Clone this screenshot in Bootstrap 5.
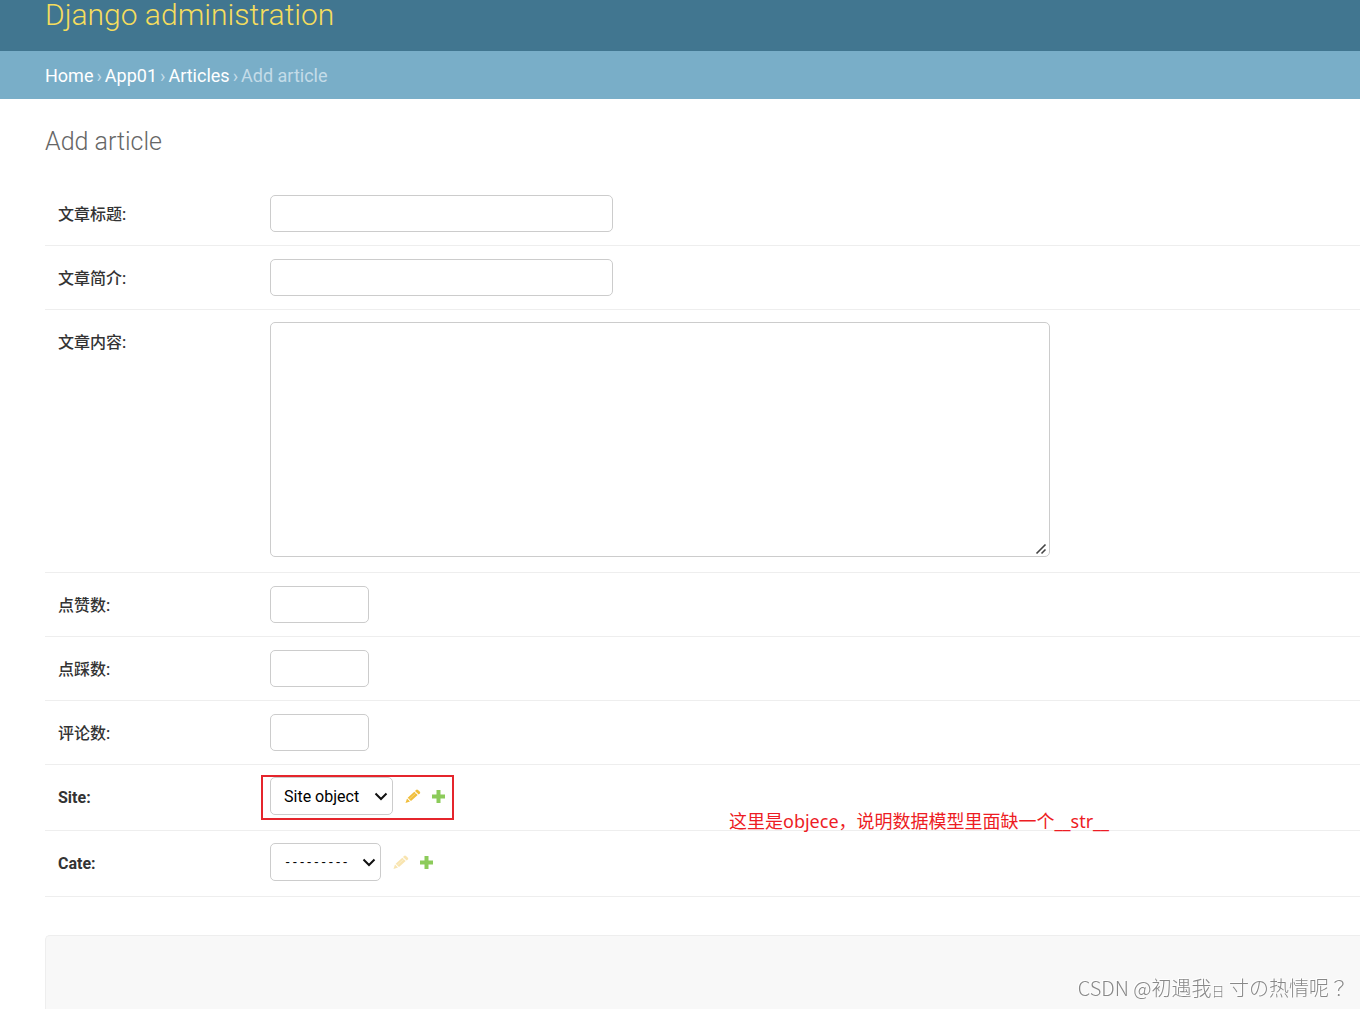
<!DOCTYPE html>
<html lang="zh-CN">
<head>
<meta charset="utf-8">
<meta name="viewport" content="width=device-width, initial-scale=1">
<title>Add article | Django site admin</title>
<link href="https://cdn.jsdelivr.net/npm/bootstrap@5.3.0/dist/css/bootstrap.min.css" rel="stylesheet">
<style>
body { font-family: Roboto, "Noto Sans CJK SC", sans-serif; font-size: 16px; line-height: 20px; color: #333; min-height: 100vh; overflow: hidden; }
.site-head { background: #417690; padding: 0 45px 21px; }
.site-head h1 { font-size: 30px; line-height: 30px; font-weight: 300; }
.site-head a { color: #f5dd5d; }
.crumbs { background: #79aec8; color: #c4dce8; padding: 15px 45px 13px; font-size: 18px; gap: 3px; }
.crumbs a { color: #fff; }
.main-area { padding: 28px 0 0 45px; }
.main-area h2 { font-size: 25px; line-height: 30px; font-weight: 300; color: #666; margin-bottom: 25px; }
.form-line { padding: 13px; border-bottom: 1px solid #eee; }
.form-line.tall-line { padding: 12px 13px 15px; }
.form-line > label { width: 212px; padding-top: 10px; font-weight: 700; flex: none; }
.form-line.tall-line > label { padding-top: 11px; }
.form-line > label.cjk-label { font-weight: 500; }
.field-box, .field-box:focus { border: 1px solid #ccc; border-radius: 5px; height: 37px; padding: 6px 8px; font-size: 16px; color: #000; }
.text-field { width: 343px; }
.num-field { width: 99px; }
textarea.field-box { width: 780px; height: 235px; max-width: 100%; resize: both; }
textarea.field-box::-webkit-resizer { background: url("data:image/svg+xml,%3Csvg xmlns='http://www.w3.org/2000/svg' width='15' height='15'%3E%3Cpath d='M2.500 12.500l9-9M7.500 12.500l4-4' stroke='%23444' stroke-width='1.600' fill='none'/%3E%3C/svg%3E") no-repeat; }
select.field-box.form-select { height: 38px; padding: 7px 20px 5px 13px; line-height: 24px; background-color: #fff; background-size: 16px 16px; background-position: right 3px center; background-image: url("data:image/svg+xml,%3Csvg xmlns='http://www.w3.org/2000/svg' viewBox='0 0 16 16'%3E%3Cpath fill='none' stroke='%23111' stroke-width='2' d='M2.500 5.500l5.500 5.500L13.500 5.500'/%3E%3C/svg%3E"); }
select.site-pick { width: 123px; }
select.cate-pick.form-select { width: 111px; font-family: "Liberation Mono", monospace; font-size: 12px; }
.related a { line-height: 0; }
.related .edit-link { margin-left: 12px; }
.related .add-link { margin-left: 9px; }
.faded { opacity: .4; }
.red-frame { top: -2px; right: -8px; bottom: -5px; left: -9px; border: 2px solid #e5252c; pointer-events: none; }
.red-note { left: 684px; top: 44px; font-family: "Noto Sans", "Noto Sans CJK SC", sans-serif; font-size: 18px; line-height: 24px; color: #ed1c24; white-space: nowrap; }
.submit-strip { margin-top: 38px; height: 90px; background: #f8f8f8; border: 1px solid #eee; border-right: 0; border-radius: 5px 0 0 5px; }
.watermark { right: 11px; bottom: 4px; font-family: "Noto Sans CJK SC", sans-serif; font-size: 20px; line-height: 28px; font-weight: 300; color: #888; text-shadow: -1px -1px 0 #fff; white-space: nowrap; }
.watermark small { font-size: 13px; }
.watermark span { font-family: "Noto Sans CJK TC", sans-serif; }
</style>
<script src="https://cdn.jsdelivr.net/npm/bootstrap@5.3.0/dist/js/bootstrap.bundle.min.js"></script>
</head>
<body class="bg-white position-relative">
<header class="site-head"><h1 class="m-0"><a href="#" class="text-decoration-none">Django administration</a></h1></header>
<nav class="crumbs d-flex" aria-label="Breadcrumbs"><a href="#" class="text-decoration-none">Home</a><span>›</span><a href="#" class="text-decoration-none">App01</a><span>›</span><a href="#" class="text-decoration-none">Articles</a><span>›</span><span>Add article</span></nav>
<main class="main-area">
<h2>Add article</h2>
<form>
<div class="form-line d-flex align-items-start"><label class="cjk-label" for="title">文章标题:</label><input class="field-box text-field" id="title" type="text"></div>
<div class="form-line d-flex align-items-start"><label class="cjk-label" for="intro">文章简介:</label><input class="field-box text-field" id="intro" type="text"></div>
<div class="form-line tall-line d-flex align-items-start"><label class="cjk-label" for="content">文章内容:</label><textarea class="field-box" id="content"></textarea></div>
<div class="form-line d-flex align-items-start"><label class="cjk-label" for="up">点赞数:</label><input class="field-box num-field" id="up" type="text"></div>
<div class="form-line d-flex align-items-start"><label class="cjk-label" for="down">点踩数:</label><input class="field-box num-field" id="down" type="text"></div>
<div class="form-line d-flex align-items-start"><label class="cjk-label" for="comments">评论数:</label><input class="field-box num-field" id="comments" type="text"></div>
<div class="form-line tall-line d-flex align-items-start position-relative">
<label for="site">Site:</label>
<div class="related d-flex align-items-center position-relative">
<select class="form-select field-box site-pick" id="site"><option>Site object</option></select>
<a class="edit-link" href="#" aria-label="Change site"><svg width="16" height="16" viewBox="0 0 16 16" fill="#f0be3c"><path d="M.5 15l1.500-4.500 3 3zM2.700 9.700l6.600-6 3.400 3.300-6.700 6zM10 3l1-1q1-.8 2 0l1.900 1.700q.7 1 0 1.800l-1.200 1.100z"/><path d="M4.500 11l6.400-6" stroke="#f8d87c" fill="none"/></svg></a>
<a class="add-link" href="#" aria-label="Add site"><svg width="16" height="16" viewBox="0 0 16 16" fill="#8ccb5a"><path d="M6.500 2h4v4.500h4.500v4h-4.500V15h-4v-4.500H2v-4h4.500z"/></svg></a>
<span class="red-frame position-absolute"></span>
</div>
<div class="red-note position-absolute">这里是objece，说明数据模型里面缺一个__str__</div>
</div>
<div class="form-line tall-line d-flex align-items-start">
<label for="cate">Cate:</label>
<div class="related d-flex align-items-center">
<select class="form-select field-box cate-pick" id="cate"><option>---------</option></select>
<a class="edit-link faded" href="#" aria-label="Change cate"><svg width="16" height="16" viewBox="0 0 16 16" fill="#f0be3c"><path d="M.5 15l1.500-4.500 3 3zM2.700 9.700l6.600-6 3.400 3.300-6.700 6zM10 3l1-1q1-.8 2 0l1.900 1.700q.7 1 0 1.800l-1.200 1.100z"/><path d="M4.500 11l6.400-6" stroke="#f8d87c" fill="none"/></svg></a>
<a class="add-link" href="#" aria-label="Add cate"><svg width="16" height="16" viewBox="0 0 16 16" fill="#8ccb5a"><path d="M6.500 2h4v4.500h4.500v4h-4.500V15h-4v-4.500H2v-4h4.500z"/></svg></a>
</div>
</div>
<div class="submit-strip"></div>
</form>
</main>
<div class="watermark position-fixed">CSDN @初遇我<small>日</small> 寸の热情呢<span lang="zh-TW">？</span></div>
</body>
</html>
